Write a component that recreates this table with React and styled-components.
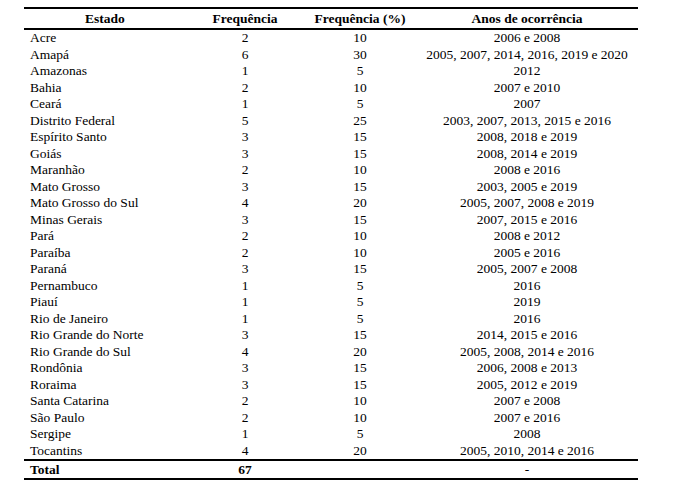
import React from 'react';
import styled, { createGlobalStyle } from 'styled-components';

const GlobalStyle = createGlobalStyle`
  html, body {
    margin: 0;
    padding: 0;
    background: #ffffff;
  }
  body {
    font-family: "Liberation Serif", "Times New Roman", serif;
    color: #000000;
  }
`;

const Page = styled.div`
  width: 674px;
  height: 497px;
  padding: 7px 0 0 24px;
  box-sizing: border-box;
`;

const Table = styled.table`
  width: 614px;
  border-collapse: collapse;
  table-layout: fixed;
  font-size: 13.5px;
`;

const Col = styled.col`
  width: ${(p) => p.$w}px;
`;

const HeadRow = styled.tr`
  border-top: 2px solid #000;
  border-bottom: 2px solid #000;
`;

const Th = styled.th`
  font-weight: bold;
  text-align: center;
  height: 19px;
  padding: 0;
  line-height: 18px;
`;

const Row = styled.tr`
  height: 16.5px;
`;

const Td = styled.td`
  padding: 0 0 0 ${(p) => (p.$left ? '6px' : '0')};
  text-align: ${(p) => (p.$left ? 'left' : 'center')};
  line-height: 16.5px;
  white-space: nowrap;
`;

const TotalRow = styled.tr`
  border-top: 2px solid #000;
  border-bottom: 2px solid #000;
`;

const TotalCell = styled.td`
  font-weight: ${(p) => (p.$bold ? 'bold' : 'normal')};
  text-align: ${(p) => (p.$left ? 'left' : 'center')};
  padding: 0 0 0 ${(p) => (p.$left ? '6px' : '0')};
  height: 17px;
  line-height: 17px;
`;

const rows = [
  ['Acre', 2, 10, '2006 e 2008'],
  ['Amapá', 6, 30, '2005, 2007, 2014, 2016, 2019 e 2020'],
  ['Amazonas', 1, 5, '2012'],
  ['Bahia', 2, 10, '2007 e 2010'],
  ['Ceará', 1, 5, '2007'],
  ['Distrito Federal', 5, 25, '2003, 2007, 2013, 2015 e 2016'],
  ['Espírito Santo', 3, 15, '2008, 2018 e 2019'],
  ['Goiás', 3, 15, '2008, 2014 e 2019'],
  ['Maranhão', 2, 10, '2008 e 2016'],
  ['Mato Grosso', 3, 15, '2003, 2005 e 2019'],
  ['Mato Grosso do Sul', 4, 20, '2005, 2007, 2008 e 2019'],
  ['Minas Gerais', 3, 15, '2007, 2015 e 2016'],
  ['Pará', 2, 10, '2008 e 2012'],
  ['Paraíba', 2, 10, '2005 e 2016'],
  ['Paraná', 3, 15, '2005, 2007 e 2008'],
  ['Pernambuco', 1, 5, '2016'],
  ['Piauí', 1, 5, '2019'],
  ['Rio de Janeiro', 1, 5, '2016'],
  ['Rio Grande do Norte', 3, 15, '2014, 2015 e 2016'],
  ['Rio Grande do Sul', 4, 20, '2005, 2008, 2014 e 2016'],
  ['Rondônia', 3, 15, '2006, 2008 e 2013'],
  ['Roraima', 3, 15, '2005, 2012 e 2019'],
  ['Santa Catarina', 2, 10, '2007 e 2008'],
  ['São Paulo', 2, 10, '2007 e 2016'],
  ['Sergipe', 1, 5, '2008'],
  ['Tocantins', 4, 20, '2005, 2010, 2014 e 2016'],
];

export default function App() {
  return (
    <Page>
      <GlobalStyle />
      <Table>
        <colgroup>
          <Col $w={162} />
          <Col $w={118} />
          <Col $w={112} />
          <Col $w={222} />
        </colgroup>
        <thead>
          <HeadRow>
            <Th>Estado</Th>
            <Th>Frequência</Th>
            <Th>Frequência (%)</Th>
            <Th>Anos de ocorrência</Th>
          </HeadRow>
        </thead>
        <tbody>
          {rows.map(([estado, freq, pct, anos]) => (
            <Row key={estado}>
              <Td $left>{estado}</Td>
              <Td>{freq}</Td>
              <Td>{pct}</Td>
              <Td>{anos}</Td>
            </Row>
          ))}
          <TotalRow>
            <TotalCell $left $bold>Total</TotalCell>
            <TotalCell $bold>67</TotalCell>
            <TotalCell />
            <TotalCell>-</TotalCell>
          </TotalRow>
        </tbody>
      </Table>
    </Page>
  );
}
